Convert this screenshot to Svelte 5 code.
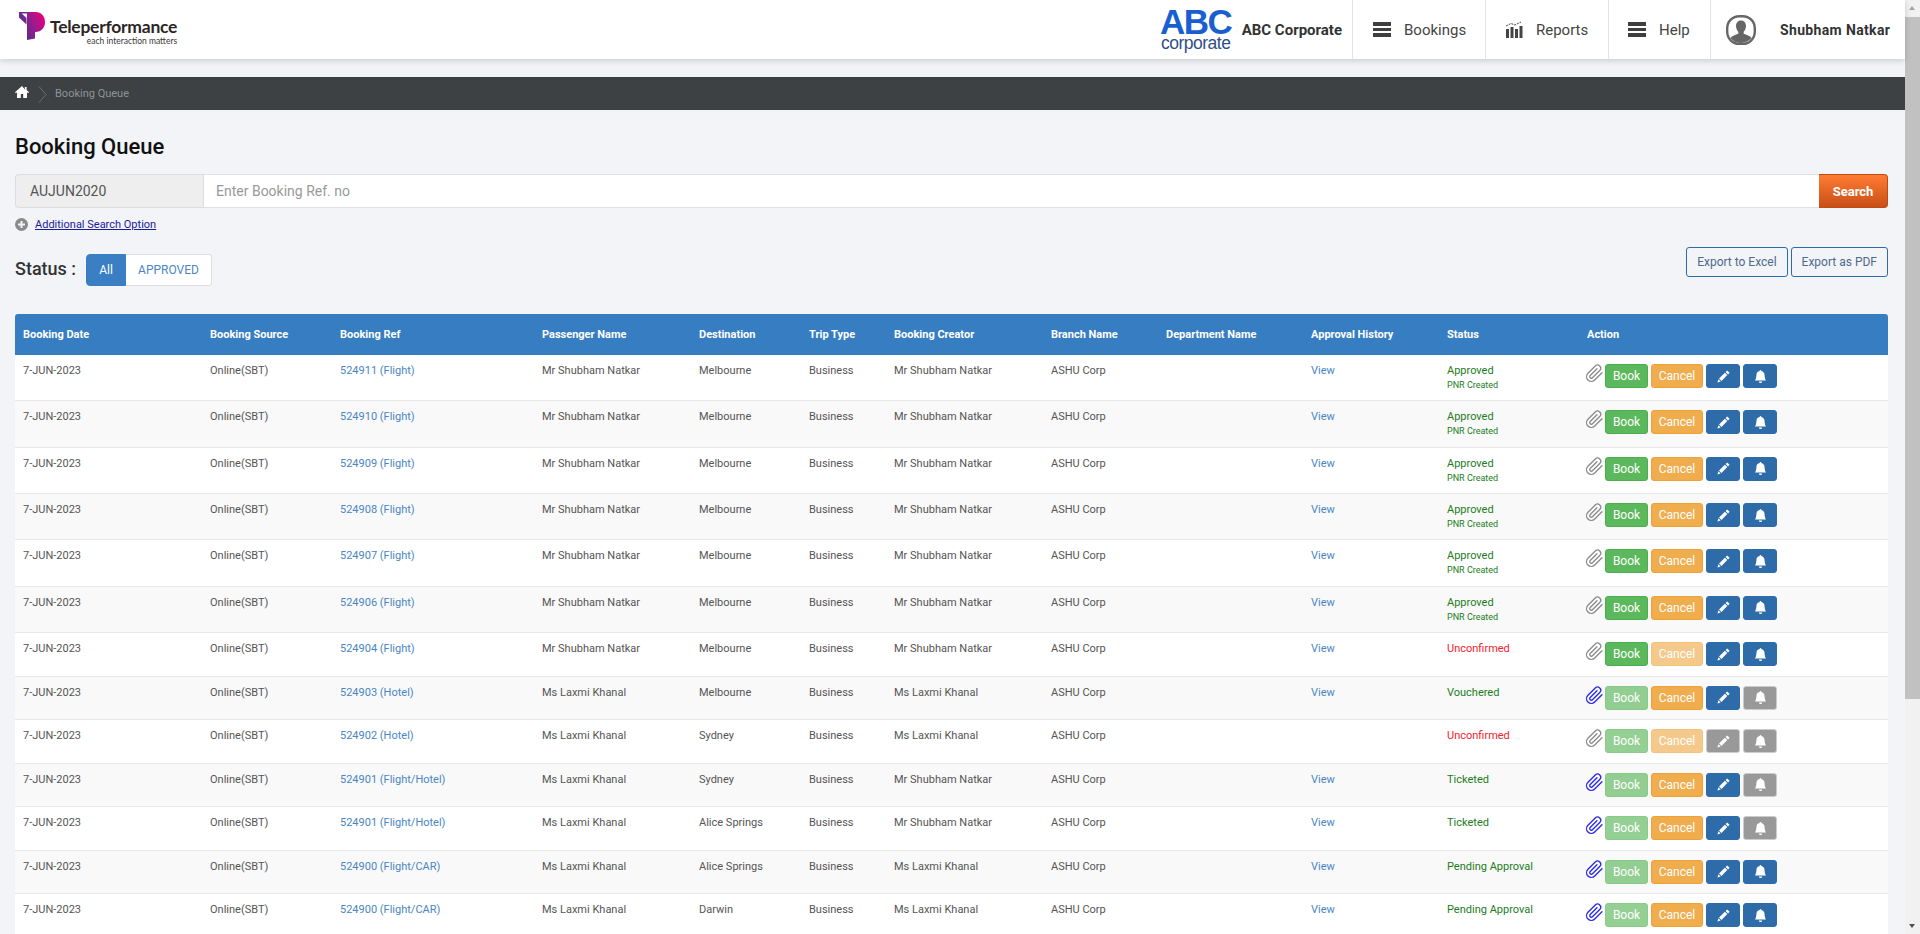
<script>
  const MR = 'Mr Shubham Natkar';
  const MS = 'Ms Laxmi Khanal';

  // flags: bookOff/cancelOff = faded buttons, editGrey/bellGrey = disabled buttons, clip = attachment present
  const rows = [
    { ref: '524911 (Flight)', pax: MR, dest: 'Melbourne', creator: MR, view: true, status: 'Approved', pnr: true },
    { ref: '524910 (Flight)', pax: MR, dest: 'Melbourne', creator: MR, view: true, status: 'Approved', pnr: true },
    { ref: '524909 (Flight)', pax: MR, dest: 'Melbourne', creator: MR, view: true, status: 'Approved', pnr: true },
    { ref: '524908 (Flight)', pax: MR, dest: 'Melbourne', creator: MR, view: true, status: 'Approved', pnr: true },
    { ref: '524907 (Flight)', pax: MR, dest: 'Melbourne', creator: MR, view: true, status: 'Approved', pnr: true },
    { ref: '524906 (Flight)', pax: MR, dest: 'Melbourne', creator: MR, view: true, status: 'Approved', pnr: true },
    { ref: '524904 (Flight)', pax: MR, dest: 'Melbourne', creator: MR, view: true, status: 'Unconfirmed', cancelOff: true },
    { ref: '524903 (Hotel)', pax: MS, dest: 'Melbourne', creator: MS, view: true, status: 'Vouchered', clip: true, bookOff: true, bellGrey: true },
    { ref: '524902 (Hotel)', pax: MS, dest: 'Sydney', creator: MS, view: false, status: 'Unconfirmed', bookOff: true, cancelOff: true, editGrey: true, bellGrey: true },
    { ref: '524901 (Flight/Hotel)', pax: MS, dest: 'Sydney', creator: MR, view: true, status: 'Ticketed', clip: true, bookOff: true, bellGrey: true },
    { ref: '524901 (Flight/Hotel)', pax: MS, dest: 'Alice Springs', creator: MR, view: true, status: 'Ticketed', clip: true, bookOff: true, bellGrey: true },
    { ref: '524900 (Flight/CAR)', pax: MS, dest: 'Alice Springs', creator: MS, view: true, status: 'Pending Approval', clip: true, bookOff: true },
    { ref: '524900 (Flight/CAR)', pax: MS, dest: 'Darwin', creator: MS, view: true, status: 'Pending Approval', clip: true, bookOff: true }
  ];

  const columns = [
    'Booking Date', 'Booking Source', 'Booking Ref', 'Passenger Name', 'Destination', 'Trip Type',
    'Booking Creator', 'Branch Name', 'Department Name', 'Approval History', 'Status', 'Action'
  ];
</script>

<div class="page">
  <div class="main">
    <header class="topbar">
      <div class="tp-logo">
        <svg class="tp-mark" viewBox="0 0 28 29">
          <defs>
            <linearGradient id="tpGrad" x1="0" y1="1" x2="1" y2="0.300">
              <stop offset="0" stop-color="#5b2a8c" />
              <stop offset="0.550" stop-color="#a01a8c" />
              <stop offset="1" stop-color="#e3007e" />
            </linearGradient>
          </defs>
          <path fill="#6a2c91" d="M1 0h8v1.500H3.700L8.500 6v6.500L1 5.500z" />
          <path fill="url(#tpGrad)" d="M9 0h8.500C23.500 0 27 4.500 27 10s-3.500 10-9.500 10H17v6.500L9 28z" />
        </svg>
        <div class="tp-text">
          <span class="tp-name">Teleperformance</span>
          <span class="tp-tag">each interaction matters</span>
        </div>
      </div>

      <div class="brand">
        <div class="abc">
          <span class="abc-big">ABC</span>
          <span class="abc-small">corporate</span>
        </div>
        <span class="brand-name">ABC Corporate</span>
      </div>

      <nav class="nav">
        <a class="nav-item bookings" href="#bookings">
          <span class="burger"><i></i><i></i><i></i></span>Bookings
        </a>
        <a class="nav-item reports" href="#reports">
          <svg class="chart" viewBox="0 0 18 18">
            <path fill="#444" d="M1 8h3v9H1zM5.500 6h3v11h-3zM10 8h3v9h-3zM14.500 5h3v12h-3z" />
            <path fill="none" stroke="#444" stroke-width="1" stroke-dasharray="2 1" d="M1 5l5-2.500 4 1.500 6-3" />
          </svg>
          Reports
        </a>
        <a class="nav-item help" href="#help">
          <span class="burger"><i></i><i></i><i></i></span>Help
        </a>
        <div class="nav-item user">
          <svg class="avatar" viewBox="0 0 30 30">
            <rect x="1.200" y="1.200" width="27.600" height="27.600" rx="12" fill="#fff" stroke="#666" stroke-width="2.400" />
            <path fill="#666" d="M15 5.500c-3.400 0-5 2.600-5 5.500 0 2.300 1 4.500 2.300 5.700v2.100c-2.600 1.100-6.500 2-7.800 4.300A12.500 12.500 0 0 0 15 28c4.200 0 8-2 10.500-4.900-1.300-2.300-5.200-3.200-7.800-4.300v-2.100C19 15.500 20 13.300 20 11c0-2.900-1.600-5.500-5-5.500z" />
          </svg>
          <span class="user-name">Shubham Natkar</span>
        </div>
      </nav>
    </header>

    <div class="crumbs">
      <svg class="home" viewBox="0 0 14 12"><path fill="#fff" d="M7 0 0 6.200l.9 1L2 6.300V12h3.800V8h2.400v4H12V6.300l1.100.9.900-1-2.400-2.100V1h-1.800v2.400z" /></svg>
      <svg class="crumb-sep" viewBox="0 0 9 17"><path fill="none" stroke="#6a6e71" stroke-width="1" d="M1 .5l7 8-7 8" /></svg>
      <span>Booking Queue</span>
    </div>

    <section class="content">
      <h1>Booking Queue</h1>

      <div class="search">
        <span class="prefix">AUJUN2020</span>
        <input class="search-input" type="text" placeholder="Enter Booking Ref. no" />
        <button class="search-btn">Search</button>
      </div>

      <div class="more">
        <svg viewBox="0 0 13 13"><circle cx="6.500" cy="6.500" r="6.500" fill="#8a8a8a" /><path stroke="#f2f4f8" stroke-width="2" d="M6.500 3v7M3 6.500h7" /></svg>
        <a href="#more">Additional Search Option</a>
      </div>

      <div class="toolbar">
        <div class="status-filter">
          <span class="status-label">Status :</span>
          <div class="tabs">
            <button class="tab active">All</button>
            <button class="tab">APPROVED</button>
          </div>
        </div>
        <div class="exports">
          <button class="export">Export to Excel</button>
          <button class="export">Export as PDF</button>
        </div>
      </div>

      <table>
        <colgroup>
          <col style="width:187px" /><col style="width:130px" /><col style="width:202px" /><col style="width:157px" />
          <col style="width:110px" /><col style="width:85px" /><col style="width:157px" /><col style="width:115px" />
          <col style="width:145px" /><col style="width:136px" /><col style="width:140px" /><col style="width:309px" />
        </colgroup>
        <thead>
          <tr>
            {#each columns as col}
              <th>{col}</th>
            {/each}
          </tr>
        </thead>
        <tbody>
          {#each rows as row}
            <tr class:tall={row.pnr}>
              <td>7-JUN-2023</td>
              <td>Online(SBT)</td>
              <td><a href="#ref">{row.ref}</a></td>
              <td>{row.pax}</td>
              <td>{row.dest}</td>
              <td>Business</td>
              <td>{row.creator}</td>
              <td>ASHU Corp</td>
              <td></td>
              <td>{#if row.view}<a href="#view">View</a>{/if}</td>
              <td class="status" class:red={row.status === 'Unconfirmed'}>
                {row.status}
                {#if row.pnr}<div class="pnr">PNR Created</div>{/if}
              </td>
              <td class="actions">
                <div class="action-row">
                  <svg class="clip" class:has-file={row.clip} viewBox="0 0 24 24">
                    <path fill="none" stroke="currentColor" stroke-width="1.700" stroke-linecap="round" stroke-linejoin="round" d="M21.440 11.050l-9.190 9.190a6 6 0 0 1-8.490-8.490l9.190-9.190a4 4 0 0 1 5.660 5.660l-9.200 9.190a2 2 0 0 1-2.830-2.830l8.490-8.480" />
                  </svg>
                  <button class="btn book" class:off={row.bookOff}>Book</button>
                  <button class="btn cancel" class:off={row.cancelOff}>Cancel</button>
                  <button class="btn square" class:grey={row.editGrey}>
                    <svg viewBox="0 0 16 16"><path fill="#fff" d="M12.500.5 10.600 2.400l3 3L15.500 3.500zM9.700 3.300 2.500 10.500l3 3 7.200-7.200zM1.800 11.500.5 15.500l4-1.300z" /></svg>
                  </button>
                  <button class="btn square" class:grey={row.bellGrey}>
                    <svg viewBox="0 0 16 16"><path fill="#fff" d="M8 16a2 2 0 0 0 2-2H6a2 2 0 0 0 2 2zm.995-14.901a1 1 0 1 0-1.990 0A5.002 5.002 0 0 0 3 6c0 1.098-.5 6-2 7h14c-1.500-1-2-5.902-2-7 0-2.420-1.720-4.440-4.005-4.901z" /></svg>
                  </button>
                </div>
              </td>
            </tr>
          {/each}
        </tbody>
      </table>
    </section>
  </div>

  <div class="scrollbar">
    <span class="arrow up"></span>
    <div class="track"><div class="thumb"></div></div>
    <span class="arrow down"></span>
  </div>
</div>

<style>
  :global(body) {
    margin: 0;
    background: #f2f4f8;
    font-family: Roboto, 'Liberation Sans', sans-serif;
  }

  .page {
    display: flex;
    height: 100vh;
    overflow: hidden;
  }

  .main {
    flex: 1;
    min-width: 0;
  }

  a {
    text-decoration: none;
  }

  /* top bar */
  .topbar {
    display: flex;
    align-items: center;
    height: 59px;
    background: #fff;
    box-shadow: 0 2px 6px rgba(0, 0, 0, 0.16);
    position: relative;
  }

  .tp-logo {
    display: flex;
    align-items: flex-start;
    margin-left: 18px;
    margin-top: -2px;
  }

  .tp-mark {
    width: 28px;
    height: 29px;
  }

  .tp-text {
    display: flex;
    flex-direction: column;
    align-items: flex-end;
    margin-left: 4px;
    margin-top: 6px;
  }

  .tp-name {
    font-family: Lato, sans-serif;
    font-size: 17.500px;
    font-weight: 700;
    line-height: 18px;
    letter-spacing: -0.250px;
    color: #2b2626;
  }

  .tp-tag {
    font-family: Lato, sans-serif;
    font-size: 8.500px;
    line-height: 10px;
    color: #3c3636;
  }

  .brand {
    display: flex;
    align-items: center;
    margin-left: auto;
    margin-right: 10px;
  }

  .abc {
    display: flex;
    flex-direction: column;
    align-items: center;
    width: 72px;
    margin-right: 10px;
    font-family: 'Liberation Sans', sans-serif;
  }

  .abc-big {
    font-size: 35px;
    line-height: 27px;
    font-weight: 700;
    letter-spacing: -1.500px;
    color: #1a5fd0;
  }

  .abc-small {
    font-size: 17.500px;
    line-height: 16px;
    letter-spacing: -0.500px;
    color: #2f4f88;
  }

  .brand-name {
    font-size: 15px;
    font-weight: 700;
    color: #333;
  }

  .nav {
    display: flex;
    height: 59px;
  }

  .nav-item {
    display: flex;
    align-items: center;
    border-left: 1px solid #e4e4e4;
    font-size: 15px;
    color: #444;
    box-sizing: border-box;
  }

  .bookings {
    width: 133px;
    padding-left: 20px;
  }

  .reports {
    width: 123px;
    padding-left: 19px;
  }

  .help {
    width: 102px;
    padding-left: 19px;
  }

  .user {
    width: 195px;
    padding-left: 15px;
  }

  .burger {
    display: flex;
    flex-direction: column;
    gap: 2px;
    width: 18px;
    margin-right: 13px;
  }

  .burger i {
    display: block;
    height: 3.500px;
    background: #3f3f3f;
  }

  .chart {
    width: 18px;
    height: 18px;
    margin-right: 13px;
  }

  .avatar {
    width: 30px;
    height: 30px;
    margin-right: 24px;
  }

  .user-name {
    font-size: 14px;
    font-weight: 700;
    color: #333;
    letter-spacing: 0.350px;
  }

  /* breadcrumb */
  .crumbs {
    display: flex;
    align-items: center;
    height: 33px;
    margin-top: 18px;
    padding-left: 15px;
    background: #3d4144;
    color: #8f9396;
    font-size: 11px;
  }

  .home {
    width: 14px;
    height: 12px;
    margin-top: -3px;
  }

  .crumb-sep {
    width: 9px;
    height: 17px;
    margin: 1px 8px 0 9px;
  }

  /* content */
  .content {
    padding: 0 17px 0 15px;
  }

  h1 {
    margin: 0;
    padding-top: 24px;
    font-size: 22px;
    line-height: 26px;
    font-weight: 500;
    color: #111;
  }

  .search {
    display: flex;
    height: 34px;
    margin-top: 14px;
  }

  .prefix {
    display: flex;
    align-items: center;
    box-sizing: border-box;
    width: 188px;
    padding-left: 14px;
    background: #eee;
    border: 1px solid #ddd;
    border-right: 0;
    border-radius: 4px 0 0 4px;
    font-size: 14px;
    color: #555;
  }

  .search-input {
    flex: 1;
    min-width: 0;
    box-sizing: border-box;
    padding: 0 12px;
    border: 1px solid #e0e0e4;
    border-left: 1px solid #ddd;
    border-right: 0;
    font-family: inherit;
    font-size: 14px;
    background: #fff;
  }

  .search-input::placeholder {
    color: #999;
    opacity: 1;
  }

  .search-btn {
    width: 69px;
    border: 1px solid #c04a10;
    border-left: 0;
    border-radius: 0 4px 4px 0;
    background: linear-gradient(#ff7b32, #c94f18);
    color: #fff;
    font-family: inherit;
    font-size: 13px;
    font-weight: 700;
    padding: 0;
  }

  .more {
    display: flex;
    align-items: center;
    gap: 7px;
    height: 13px;
    margin-top: 10px;
    font-size: 11px;
  }

  .more svg {
    width: 13px;
    height: 13px;
  }

  .more a {
    color: #1a1a9c;
    text-decoration: underline;
  }

  .toolbar {
    display: flex;
    justify-content: space-between;
    align-items: flex-start;
    height: 67px;
    margin-top: 16px;
  }

  .status-filter {
    display: flex;
    align-items: center;
    padding-top: 7px;
  }

  .status-label {
    width: 71px;
    font-size: 18px;
    font-weight: 500;
    color: #333;
    margin-top: -4px;
  }

  .tabs {
    display: flex;
    height: 32px;
    box-sizing: border-box;
  }

  .tab {
    border: 1px solid #ddd;
    border-left: 0;
    background: #fff;
    color: #4a86c5;
    font-family: inherit;
    font-size: 12px;
    padding: 0 12px;
    width: 86px;
    border-radius: 0 3px 3px 0;
  }

  .tab.active {
    width: 40px;
    border: 1px solid #3a7fc4;
    background: #3a7fc4;
    color: #fff;
    border-radius: 4px 0 0 4px;
    padding: 0;
  }

  .exports {
    display: flex;
    gap: 3px;
  }

  .export {
    height: 30px;
    padding: 0 10px;
    border: 1px solid #2d6ca8;
    border-radius: 3px;
    background: transparent;
    color: #4e6a8e;
    font-family: inherit;
    font-size: 12px;
  }

  /* table */
  table {
    width: 1873px;
    table-layout: fixed;
    border-collapse: separate;
    border-spacing: 0;
    font-size: 11px;
    color: #555;
  }

  th {
    height: 41px;
    padding: 0 8px;
    background: #377dc2;
    color: #fff;
    font-weight: 700;
    font-size: 11px;
    text-align: left;
    white-space: nowrap;
  }

  th:first-child {
    border-top-left-radius: 3px;
  }

  th:last-child {
    border-top-right-radius: 3px;
  }

  td {
    height: 43.500px;
    box-sizing: border-box;
    padding: 8px;
    line-height: 16px;
    vertical-align: top;
    background: #fff;
    border-bottom: 1px solid #e8e8e8;
    white-space: nowrap;
  }

  tr.tall td {
    height: 46.350px;
  }

  tbody tr:nth-child(even) td {
    background: #f9f9f9;
  }

  td a {
    color: #4a86c5;
  }

  .status {
    color: #1b7d1b;
  }

  .status.red {
    color: #f5222d;
  }

  .pnr {
    font-size: 9px;
    line-height: 13.170px;
  }

  td.actions {
    padding: 9px 0 0 5.500px;
  }

  .action-row {
    display: flex;
    align-items: flex-start;
    gap: 3px;
  }

  .clip {
    flex: none;
    width: 19px;
    height: 19px;
    margin-right: -1.500px;
    color: #8c8c8c;
  }

  .clip.has-file {
    color: #2a2ae8;
  }

  .btn {
    height: 24px;
    box-sizing: border-box;
    padding: 0;
    border: 1px solid;
    border-radius: 3px;
    color: #fff;
    font-family: inherit;
    font-size: 12px;
    display: flex;
    align-items: center;
    justify-content: center;
  }

  .book {
    width: 43px;
    background: #5cb85c;
    border-color: #4cae4c;
  }

  .cancel {
    width: 52px;
    background: #f0ad4e;
    border-color: #eea236;
  }

  .off {
    opacity: 0.65;
  }

  .square {
    width: 34px;
    background: #2d6ca8;
    border-color: #2d6ca8;
  }

  .square svg {
    width: 13px;
    height: 13px;
  }

  .square.grey {
    background: #999;
    border-color: #ccc;
  }

  /* window scrollbar */
  .scrollbar {
    display: flex;
    flex-direction: column;
    width: 15px;
    background: #f1f1f1;
  }

  .arrow {
    flex: none;
    height: 17px;
    position: relative;
  }

  .arrow::after {
    content: '';
    position: absolute;
    left: 4px;
    border-left: 3.500px solid transparent;
    border-right: 3.500px solid transparent;
  }

  .arrow.up::after {
    top: 6px;
    border-bottom: 4px solid #a3a3a3;
  }

  .arrow.down::after {
    bottom: 6px;
    border-top: 4px solid #505050;
  }

  .track {
    flex: 1;
  }

  .thumb {
    height: 682px;
    background: #c1c1c1;
  }
</style>
